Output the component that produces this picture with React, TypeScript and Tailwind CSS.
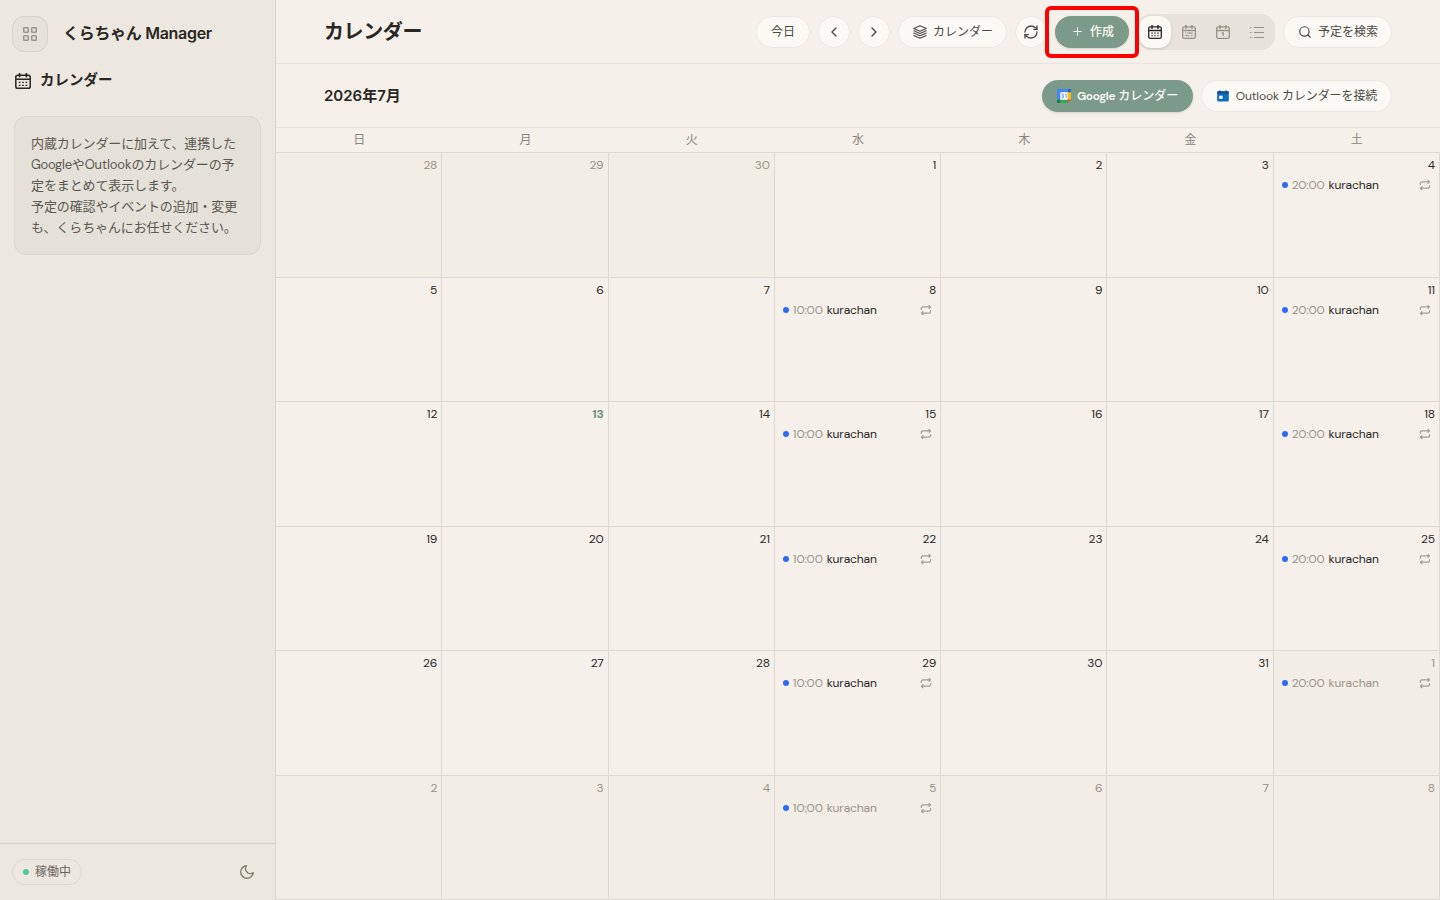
import React from "react";
import { ChevronLeft, ChevronRight, Plus, RefreshCw, Search } from "lucide-react";

interface CalendarEvent {
  time: string;
  title: string;
}

interface DayCellProps {
  day: number;
  outside: boolean;
  today: boolean;
  event: CalendarEvent | null;
}

interface CalendarIconProps {
  size: number;
  children?: React.ReactNode;
}

const weekdays = ["日", "月", "火", "水", "木", "金", "土"];

const CalendarIcon: React.FC<CalendarIconProps> = ({ size, children }) => (
  <svg width={size} height={size} viewBox="0 0 16 16" fill="none" stroke="currentColor" strokeWidth="1.5" strokeLinecap="round" strokeLinejoin="round">
    <rect x=".8" y="2.2" width="14.4" height="13" rx="1.8" />
    <path d="M.8 6.3h14.4" />
    <path d="M4.6.8v2.8M11.4.8v2.8" strokeWidth="1.8" />
    {children}
  </svg>
);

const MonthDots = () => (
  <path d="M3.8 9.3h1.7M7.15 9.3h1.7M10.5 9.3h1.7M3.8 12.3h1.7M7.15 12.3h1.7M10.5 12.3h1.7" strokeWidth="1.3" strokeLinecap="butt" />
);

const GridIcon = () => (
  <svg width="14" height="14" viewBox="0 0 14 14" fill="none" stroke="currentColor" strokeWidth="1.5">
    <rect x=".7" y=".7" width="4.6" height="4.6" rx=".9" />
    <rect x="8.7" y=".7" width="4.6" height="4.6" rx=".9" />
    <rect x=".7" y="8.7" width="4.6" height="4.6" rx=".9" />
    <rect x="8.7" y="8.7" width="4.6" height="4.6" rx=".9" />
  </svg>
);

const StackIcon = () => (
  <svg width="14" height="14" viewBox="0 0 14 14" fill="none" stroke="currentColor" strokeWidth="1.1" strokeLinecap="round" strokeLinejoin="round">
    <path d="M7 .8l6.2 2.7L7 6.2.8 3.5ZM.8 5.8L7 8.5l6.2-2.7M.8 8.1L7 10.8l6.2-2.7M.8 10.4L7 13.2l6.2-2.8" />
  </svg>
);

const MoonIcon = () => (
  <svg width="14" height="14" viewBox="0 0 14 14" fill="none" stroke="currentColor" strokeWidth="1.4" strokeLinejoin="round">
    <path d="M6.4.7A6.3 6.3 0 1 0 13.3 7.6C11.7 9 9 8.9 7.3 7.4C5.4 5.8 5.1 2.9 6.4.7Z" />
  </svg>
);

const RepeatIcon = () => (
  <svg width="12" height="12" viewBox="0 0 12 12" fill="none" stroke="currentColor" strokeWidth="1.2" strokeLinecap="round" strokeLinejoin="round">
    <path d="M1.3 5.4V4.5a1.7 1.7 0 0 1 1.7-1.7h7.3M9 1.3l1.5 1.5L9 4.3M10.6 6.6v.9A1.7 1.7 0 0 1 9 9.2H1.5M3 7.7L1.4 9.2 3 10.7" />
  </svg>
);

const ListIcon = () => (
  <svg width="14" height="14" viewBox="0 0 14 14" fill="none" stroke="currentColor" strokeWidth="1.2">
    <path d="M4 2.5h10M4 7.5h10M4 12.5h10M0 2.5h1.5M0 7.5h1.5M0 12.5h1.5" />
  </svg>
);

const GoogleCalendarLogo = () => (
  <svg width="14" height="14" viewBox="0 0 14 14">
    <path fill="#4285f4" d="M1 0h9.7v3.3H3.3v7.4H0V1a1 1 0 0 1 1-1Z" />
    <path fill="#1967d2" d="M10.7 0H13a1 1 0 0 1 1 1v2.3h-3.3Z" />
    <path fill="#fbbc04" d="M10.7 3.3H14v7.4h-3.3Z" />
    <path fill="#34a853" d="M3.3 10.7h7.4V14H3.3Z" />
    <path fill="#188038" d="M0 10.7h3.3V14H1a1 1 0 0 1-1-1Z" />
    <path fill="#ea4335" d="M10.7 14v-3.3H14Z" />
    <path fill="#fff" d="M3.3 3.3h7.4v7.4H3.3Z" />
    <path fill="none" stroke="#4285f4" strokeWidth=".8" d="M4.5 5.1h1.7v3.8H4.5M4.8 7h1.4M8 5.5l1.1-.5v4" />
  </svg>
);

const OutlookLogo = () => (
  <svg width="12" height="12" viewBox="0 0 12 12">
    <path fill="#0f6cbd" d="M1 1.5h10a.8.8 0 0 1 .8.8v8.2a.9.9 0 0 1-.9.9H1.1a.9.9 0 0 1-.9-.9V2.3a.8.8 0 0 1 .8-.8Z" />
    <path fill="#0f548c" d="M1 1.2h1V.4h1.7v.8h4.6V.4H10v.8h1a.8.8 0 0 1 .8.8v1.8H.2V2a.8.8 0 0 1 .8-.8Z" />
    <path fill="#fff" d="M2.2 5.7h3.4v3.1H2.2Z" />
  </svg>
);

const pill = "flex h-8 items-center justify-center rounded-full border border-[#ece9e3] bg-[#faf9f4] text-xs text-[#4c4943]";

const Sidebar = () => (
  <aside className="flex w-[276px] shrink-0 flex-col border-r border-[#d9d5ce] bg-[#ece7df]">
    <div className="flex items-center gap-[15px] px-3 pt-4">
      <button className="flex size-9 items-center justify-center rounded-xl border border-[#d6d3ca] bg-[#e5e2d9] text-[#9b968a]">
        <GridIcon />
      </button>
      <span className="mb-[2px] whitespace-nowrap font-[Inter,'Noto_Sans_CJK_JP',sans-serif] text-[16px] font-semibold leading-6 tracking-[-0.3px] text-[#292724]">くらちゃん Manager</span>
    </div>
    <div className="mt-4 flex items-center gap-[9px] pl-[15px] text-[#292724]">
      <span className="mt-[2px]"><CalendarIcon size={16}><MonthDots /></CalendarIcon></span>
      <span className="text-[14.5px] font-semibold leading-6">カレンダー</span>
    </div>
    <div className="mx-[14px] mt-[24px] rounded-xl border border-[#d6d9cc] bg-[#e3e1d8] p-4 text-[13px] leading-[21px] tracking-[-0.12px] text-[#5b5851]">
      <p className="whitespace-nowrap">内蔵カレンダーに加えて、連携した</p>
      <p className="whitespace-nowrap"><span className="tracking-[-0.3px]">Google</span>や<span className="tracking-[-0.1px]">Outlook</span>のカレンダーの予</p>
      <p>定をまとめて表示します。</p>
      <p className="whitespace-nowrap">予定の確認やイベントの追加・変更</p>
      <p className="whitespace-nowrap">も、くらちゃんにお任せください。</p>
    </div>
    <div className="mt-auto flex h-[57px] items-center justify-between border-t border-[#d6d3cb] pr-[21px] pl-3">
      <div className="flex h-[26px] w-[70px] items-center gap-[6px] rounded-full border border-[#dedad2] pl-[10px] text-xs text-[#68645c]">
        <span className="size-[6px] shrink-0 rounded-full bg-[#50c99a]" />
        <span className="whitespace-nowrap">稼働中</span>
      </div>
      <button className="text-[#827d71]"><MoonIcon /></button>
    </div>
  </aside>
);

const Toolbar = () => (
  <header className="flex h-16 shrink-0 items-center justify-between border-b border-[#e8e3dc] px-12">
    <h1 className="pt-px text-[20px] font-bold leading-7 tracking-[-0.4px] text-[#292724]">カレンダー</h1>
    <div className="flex items-center gap-2">
      <button className={`${pill} w-[54px]`}>今日</button>
      <button className={`${pill} w-8`}><ChevronLeft size={16} strokeWidth={2} /></button>
      <button className={`${pill} w-8`}><ChevronRight size={16} strokeWidth={2} /></button>
      <button className={`${pill} w-[109px] gap-[6px] pl-px`}><StackIcon />カレンダー</button>
      <button className={`${pill} w-8`}><RefreshCw size={16} strokeWidth={2} /></button>
      <div className="relative">
        <button className="flex h-8 w-[74px] items-center justify-center gap-[6px] rounded-full bg-[#7c9a89] pl-px text-xs font-medium text-[#faf9f4] shadow-sm">
          <Plus size={13} strokeWidth={1.8} />
          作成
        </button>
        <span className="pointer-events-none absolute -inset-[10px] rounded-[6px] border-4 border-[#fe0000]" />
      </div>
      <div className="flex h-9 items-center gap-[2px] rounded-[14px] bg-[#e7e3db] p-[2px] text-[#989286]">
        <button className="flex size-8 items-center justify-center rounded-xl bg-[#faf9f4] text-[#292724] shadow-sm">
          <CalendarIcon size={14}><MonthDots /></CalendarIcon>
        </button>
        <button className="flex size-8 items-center justify-center">
          <CalendarIcon size={14}>
            <path d="M3.6 9.3h1.2M6 9.3h6.2M3.6 12.3h4.8M10 12.3h2.2" strokeWidth="1.3" strokeLinecap="butt" />
          </CalendarIcon>
        </button>
        <button className="flex size-8 items-center justify-center">
          <CalendarIcon size={14}>
            <path d="M7.2 9.2l1-.6v3.5" />
          </CalendarIcon>
        </button>
        <button className="flex size-8 items-center justify-center"><ListIcon /></button>
      </div>
      <button className={`${pill} w-[109px] gap-[6px] pl-px`}><Search size={14} strokeWidth={2} />予定を検索</button>
    </div>
  </header>
);

const AccountBar = () => (
  <div className="flex h-16 shrink-0 items-center justify-between border-b border-[#e8e3dc] px-12">
    <h2 className="font-[Inter,'Noto_Sans_CJK_JP',sans-serif] text-[15px] font-semibold leading-6 text-[#292724]">2026年7月</h2>
    <div className="flex gap-2">
      <button className="flex h-8 w-[151px] items-center gap-[6px] rounded-full bg-[#7c9a89] pl-[15px] text-xs font-medium whitespace-nowrap text-[#faf9f4] shadow-sm">
        <GoogleCalendarLogo />
        <span><span className="font-semibold tracking-[-0.4px]">Google</span> カレンダー</span>
      </button>
      <button className={`${pill} w-[191px] gap-[7px] pl-px whitespace-nowrap`}>
        <OutlookLogo />
        <span className="tracking-[-0.1px]">Outlook カレンダーを接続</span>
      </button>
    </div>
  </div>
);

const DayCell: React.FC<DayCellProps> = ({ day, outside, today, event }) => {
  const dayColor = today ? "font-bold text-[#6f927d]" : outside ? "text-[#98938a]" : "text-[#292724]";

  return (
    <div className={`min-w-0 border-r border-b border-[#dedad3] ${outside ? "bg-[#f2ede5]" : ""}`}>
      <div className={`pt-1 pr-1 text-right text-xs leading-4 tracking-[-0.1px] ${dayColor}`}>{day}</div>
      {event && (
        <div className="mt-1 flex h-4 items-center pr-2 pl-2 text-xs leading-4">
          <span className="mr-1 size-[6px] rounded-full bg-[#2f6bf2]" />
          <span className="mr-1 tracking-[-0.2px] text-[#99938b]">{event.time}</span>
          <span className={`tracking-[-0.12px] ${outside ? "text-[#98938a]" : "text-[#292724]"}`}>{event.title}</span>
          <span className="ml-auto text-[#a39e94]"><RepeatIcon /></span>
        </div>
      )}
    </div>
  );
};

const MonthGrid = () => {
  const cells = Array.from({ length: 42 }, (_, i) => {
    const date = new Date(2026, 5, 28 + i);
    const outside = date.getMonth() !== 6;
    let event: CalendarEvent | null = null;
    if (i > 3 && i % 7 === 3) event = { time: "10:00", title: "kurachan" };
    if (i < 35 && i % 7 === 6) event = { time: "20:00", title: "kurachan" };
    return { day: date.getDate(), outside, today: !outside && date.getDate() === 13, event };
  });

  return (
    <>
      <div className="grid h-[25px] shrink-0 grid-cols-7 border-b border-[#dedad3]">
        {weekdays.map((name) => (
          <div key={name} className="text-center text-xs leading-6 text-[#8b867d]">{name}</div>
        ))}
      </div>
      <div className="grid min-h-0 flex-1 grid-cols-7 grid-rows-6">
        {cells.map((cell, i) => (
          <DayCell key={i} {...cell} />
        ))}
      </div>
    </>
  );
};

export default function App() {
  return (
    <div className="flex h-screen overflow-hidden bg-[#f5f0ea] font-['DM_Sans',Inter,'Noto_Sans_CJK_JP',sans-serif]" lang="ja">
      <Sidebar />
      <main className="flex min-w-0 flex-1 flex-col">
        <Toolbar />
        <AccountBar />
        <MonthGrid />
      </main>
    </div>
  );
}
